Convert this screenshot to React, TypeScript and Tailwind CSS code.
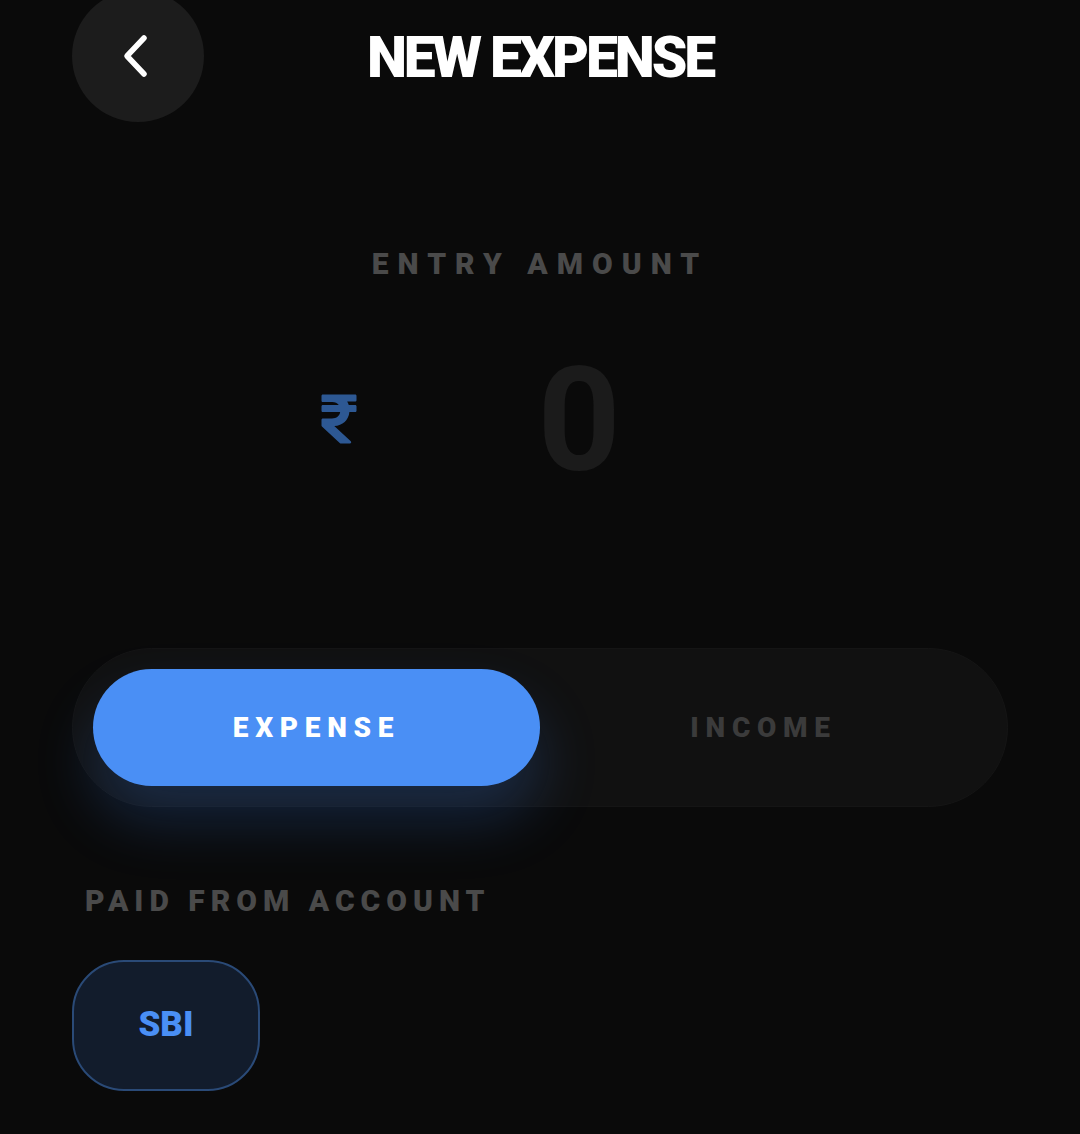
import { FaRupeeSign } from "react-icons/fa";

const App = () => {
  return (
    <div className="min-h-screen w-full bg-[#0a0a0a] font-['Roboto',sans-serif] overflow-hidden">
      <div className="px-[72px]">
        {/* header */}
        <div className="grid grid-cols-[132px_1fr_132px] items-center mt-[-10px] h-[132px]">
          <button className="w-[132px] h-[132px] rounded-full bg-[#1c1c1c] flex items-center justify-center">
            <svg width="40" height="44" viewBox="0 0 40 44" fill="none" className="ml-[-2px]">
              <path d="M27 4 L10 22 L27 40" stroke="white" strokeWidth="5.5" strokeLinecap="round" strokeLinejoin="round" />
            </svg>
          </button>
          <h1 className="text-center text-white font-black text-[57px] tracking-[-0.055em] leading-none mt-[2px]">
            NEW EXPENSE
          </h1>
          <div />
        </div>

        {/* amount */}
        <p className="mt-[124px] text-center text-[30px] leading-[36px] font-black tracking-[0.3em] text-[#4a4a4a]">
          ENTRY AMOUNT
        </p>
        <div className="mt-[61px] flex items-center justify-center h-[150px]">
          <FaRupeeSign className="text-[#2d5893] w-[36px] h-[56px] mt-[2px]" />
          <div className="ml-[42px] w-[361px] text-center text-[145px] leading-[150px] font-bold text-[#1b1b1b] pt-[4px]">
            0
          </div>
        </div>

        {/* type toggle */}
        <div className="mt-[155px] h-[159px] rounded-full bg-[#111111] border border-[#151515] p-[20px] grid grid-cols-2">
          <button className="rounded-full bg-[#4a8ff5] text-white text-[28px] font-black tracking-[0.24em] shadow-[0_34px_60px_rgba(59,130,246,0.22)]">
            EXPENSE
          </button>
          <button className="rounded-full text-[#3b3b3b] text-[28px] font-black tracking-[0.24em]">
            INCOME
          </button>
        </div>

        {/* account */}
        <p className="mt-[76px] pl-[13px] text-[30px] leading-[36px] font-black tracking-[0.2em] text-[#4a4a4a]">
          PAID FROM ACCOUNT
        </p>
        <div className="mt-[41px] flex">
          <button className="w-[188px] h-[131px] rounded-[52px] bg-[#121c2c] border-2 border-[#2a4a77] text-[#4a8ff5] text-[35px] font-black">
            SBI
          </button>
        </div>
      </div>
    </div>
  );
};

export default App;
